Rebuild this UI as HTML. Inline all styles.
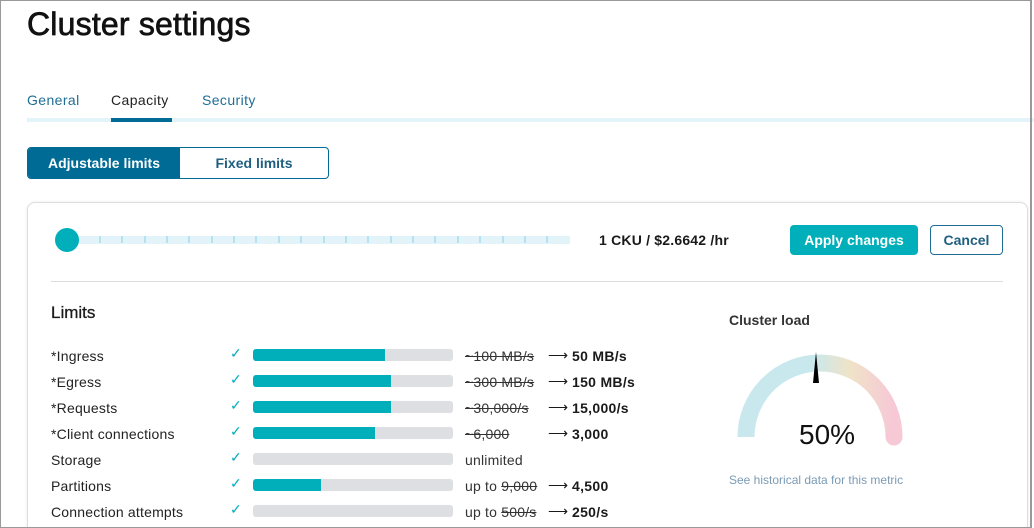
<!DOCTYPE html><html><head><style>
*{margin:0;padding:0;box-sizing:border-box}
html,body{width:1034px;height:528px;overflow:hidden}
body{background:#fff;font-family:"Liberation Sans",sans-serif;color:#1a1a1a;position:relative}
.a{position:absolute;white-space:nowrap}
.frame{position:absolute;left:0;top:0;width:1032px;height:528px;border:1px solid #999;border-right:2px solid #999;z-index:5;pointer-events:none}
.lbl{font-size:14px;color:#222;left:51px;letter-spacing:.2px}
.chk{left:230px;color:#00afba;font-size:14px}
.bar{left:253px;width:200px;height:12px;background:#dddfe3;border-radius:3px;overflow:hidden}
.bar i{display:block;height:100%;background:#00afba}
.old{left:465px;font-size:14px;color:#333;letter-spacing:.2px}
.arr{left:548px;font-size:14px}
.new{left:572px;font-size:14px;font-weight:bold;letter-spacing:.3px}
</style></head><body>
<div class="frame"></div>
<div class="a" style="left:27px;top:6px;font-size:32px;color:#111;-webkit-text-stroke:.7px #111;letter-spacing:.2px">Cluster settings</div>
<div class="a" style="left:27px;top:92px;font-size:14px;color:#1f6d96;letter-spacing:.4px">General</div>
<div class="a" style="left:111px;top:92px;font-size:14px;color:#222;letter-spacing:.4px">Capacity</div>
<div class="a" style="left:202px;top:92px;font-size:14px;color:#1f6d96;letter-spacing:.4px">Security</div>
<div class="a" style="left:27px;top:118px;width:1007px;height:4px;background:#e3f3fa"></div>
<div class="a" style="left:111px;top:118px;width:61px;height:4px;background:#006b94"></div>
<div class="a" style="left:27px;top:147px;width:302px;height:32px;border:1px solid #006b94;border-radius:4px;overflow:hidden">
<div class="a" style="left:0;top:0;width:152px;height:30px;background:#006b94;color:#fff;font-weight:bold;font-size:14px;line-height:30px;text-align:center">Adjustable limits</div>
<div class="a" style="left:152px;top:0;width:148px;height:30px;color:#1f5f80;font-weight:bold;font-size:14px;line-height:30px;text-align:center">Fixed limits</div></div>
<div class="a" style="left:27px;top:202px;width:1001px;height:340px;border:1px solid #ddd;border-radius:8px;box-shadow:0 0 3px rgba(0,0,0,.08)"></div>
<div class="a" style="left:67px;top:236px;width:503px;height:8px;background:#e3f3fa"></div>
<svg class="a" style="left:0;top:0" width="600" height="260"><g stroke="#a7dcea" stroke-width="1.5">
<path d="M100 236v7M122 236v7M145 236v7M167 236v7M189 236v7M212 236v7M234 236v7M256 236v7M279 236v7M301 236v7M324 236v7M346 236v7M368 236v7M391 236v7M413 236v7M435 236v7M458 236v7M480 236v7M503 236v7M525 236v7M547 236v7"/></g>
<circle cx="67" cy="240" r="12" fill="#00afba"/></svg>
<div class="a" style="left:599px;top:232px;font-size:14px;font-weight:bold;letter-spacing:.2px">1 CKU / $2.6642 /hr</div>
<div class="a" style="left:790px;top:225px;width:128px;height:30px;background:#00afba;border-radius:4px;color:#fff;font-weight:bold;font-size:14px;line-height:30px;text-align:center">Apply changes</div>
<div class="a" style="left:930px;top:225px;width:73px;height:30px;border:1px solid #1f6d96;border-radius:4px;color:#1f5f80;font-weight:bold;font-size:14px;line-height:28px;text-align:center">Cancel</div>
<div class="a" style="left:51px;top:281px;width:952px;height:1px;background:#ddd"></div>
<div class="a" style="left:51px;top:303px;font-size:17px;-webkit-text-stroke:.3px #1a1a1a">Limits</div>

<div class="a lbl" style="top:348px">*Ingress</div><div class="a chk" style="top:345px">✓</div><div class="a bar" style="top:349px"><i style="width:132px"></i></div><div class="a old" style="top:348px"><s>~100 MB/s</s></div><div class="a arr" style="top:347px">⟶</div><div class="a new" style="top:348px">50 MB/s</div>
<div class="a lbl" style="top:374px">*Egress</div><div class="a chk" style="top:371px">✓</div><div class="a bar" style="top:375px"><i style="width:138px"></i></div><div class="a old" style="top:374px"><s>~300 MB/s</s></div><div class="a arr" style="top:373px">⟶</div><div class="a new" style="top:374px">150 MB/s</div>
<div class="a lbl" style="top:400px">*Requests</div><div class="a chk" style="top:397px">✓</div><div class="a bar" style="top:401px"><i style="width:138px"></i></div><div class="a old" style="top:400px"><s>~30,000/s</s></div><div class="a arr" style="top:399px">⟶</div><div class="a new" style="top:400px">15,000/s</div>
<div class="a lbl" style="top:426px">*Client connections</div><div class="a chk" style="top:423px">✓</div><div class="a bar" style="top:427px"><i style="width:122px"></i></div><div class="a old" style="top:426px"><s>~6,000</s></div><div class="a arr" style="top:425px">⟶</div><div class="a new" style="top:426px">3,000</div>
<div class="a lbl" style="top:452px">Storage</div><div class="a chk" style="top:449px">✓</div><div class="a bar" style="top:453px"></div><div class="a old" style="top:452px">unlimited</div>
<div class="a lbl" style="top:478px">Partitions</div><div class="a chk" style="top:475px">✓</div><div class="a bar" style="top:479px"><i style="width:68px"></i></div><div class="a old" style="top:478px">up to <s>9,000</s></div><div class="a arr" style="top:477px">⟶</div><div class="a new" style="top:478px">4,500</div>
<div class="a lbl" style="top:504px">Connection attempts</div><div class="a chk" style="top:501px">✓</div><div class="a bar" style="top:505px"></div><div class="a old" style="top:504px">up to <s>500/s</s></div><div class="a arr" style="top:503px">⟶</div><div class="a new" style="top:504px">250/s</div>

<div class="a" style="left:729px;top:312px;font-size:14px;font-weight:bold;color:#333">Cluster load</div>
<svg class="a" style="left:720px;top:340px" width="200" height="120">
<defs><linearGradient id="g" x1="0" x2="1"><stop offset="0.45" stop-color="#c9e8ee"/><stop offset="0.7" stop-color="#efe3c8"/><stop offset="1" stop-color="#f7c8d6"/></linearGradient></defs>
<path d="M26 97 A74 74 0 0 1 174 97" fill="none" stroke="url(#g)" stroke-width="17" stroke-linecap="butt"/>
<circle cx="174" cy="97" r="8.5" fill="#f7c8d6"/>
<path d="M96 12 L99 43 L93 43 Z" fill="#000"/>
</svg>
<div class="a" style="left:799px;top:419px;font-size:28px;color:#111">50%</div>
<div class="a" style="left:729px;top:473px;font-size:12px;color:#7b9bb5">See historical data for this metric</div>
</body></html>
